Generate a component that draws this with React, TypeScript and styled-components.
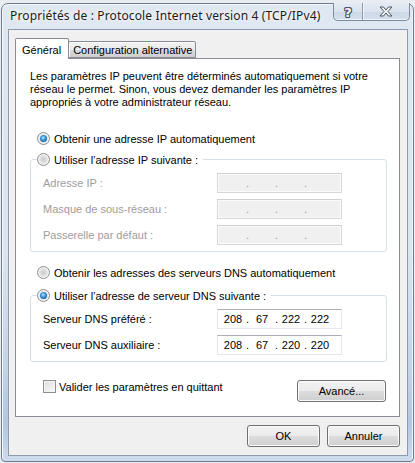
import React from 'react';
import styled, { createGlobalStyle } from 'styled-components';

const DLG = `"Liberation Sans", Arial, sans-serif`;
const CAP = `"Noto Sans", "Open Sans", sans-serif`;

const GlobalStyle = createGlobalStyle`
  * { box-sizing: border-box; }
  html, body { margin: 0; padding: 0; }
  body {
    width: 415px; height: 463px; overflow: hidden;
    padding: 3px 0 0 1px;
    background: #e9ecf0;
    font-family: ${DLG};
    font-size: 11px;
    color: #000;
  }
`;

const Window = styled.div`
  width: 413px;
  height: 459px;
  border: 1px solid #6c7b8e;
  border-radius: 7px 7px 4px 4px;
  background: linear-gradient(to bottom, #dfe7f1 0%, #dbe4ef 55%, #c3d3e8 80%, #b2c7e2 92%, #cfdcec 100%);
  padding: 0 5px 5px 6px;
  display: flex;
  flex-direction: column;
  box-shadow: inset 1px 1px 0 #f6f9fc, inset -1px 0 0 #f0f4f9;
`;

const TitleBar = styled.div`
  height: 25px;
  display: flex;
  align-items: flex-start;
`;

const Title = styled.div`
  font-family: ${CAP};
  font-size: 12px;
  letter-spacing: 0.14px;
  color: #1b1b1b;
  margin: 4px 0 0 2px;
  line-height: 16px;
  text-shadow: 0 0 6px #ffffff, 0 0 3px #ffffff;
  white-space: nowrap;
`;

const CaptionGroup = styled.div`
  margin: -1px -2px 0 auto;
  display: flex;
  height: 18px;
  border: 1px solid #7d8ba0;
  border-top: none;
  border-radius: 0 0 5px 5px;
  overflow: hidden;
  background: linear-gradient(to bottom, #e4ebf4 0%, #dbe3ee 50%, #ccd7e6 51%, #d6e0ec 100%);
  box-shadow: inset 0 -1px 0 #eef3f9;
`;

const CaptionButton = styled.div<{ $w: number; $sep?: boolean }>`
  width: ${p => p.$w}px;
  height: 100%;
  display: flex;
  align-items: center;
  justify-content: center;
  border-left: ${p => (p.$sep ? '1px solid #8d9bb0' : 'none')};
  box-shadow: ${p => (p.$sep ? 'inset 1px 0 0 #eef3f9' : 'none')};
`;

const HelpGlyph = styled.span`
  font-family: "DejaVu Sans", sans-serif;
  font-weight: bold;
  font-size: 13px;
  line-height: 13px;
  color: #f4f6f9;
  margin-top: 1px;
  text-shadow: 1px 0 0 #4a5564, -1px 0 0 #4a5564, 0 1px 0 #4a5564, 0 -1px 0 #4a5564,
    1px 1px 0 #4a5564, -1px -1px 0 #4a5564, 1px -1px 0 #4a5564, -1px 1px 0 #4a5564;
`;

const Client = styled.div`
  flex: 1;
  background: #f0f0f0;
  border: 1px solid #8e9bad;
  padding: 8px 7px 8px 6px;
  display: flex;
  flex-direction: column;
`;

const TabStrip = styled.div`
  display: flex;
  align-items: flex-end;
  height: 20px;
  position: relative;
  z-index: 1;
`;

const Tab = styled.div<{ $active?: boolean }>`
  height: ${p => (p.$active ? 21 : 17)}px;
  margin-bottom: ${p => (p.$active ? -1 : 0)}px;
  margin-left: ${p => (p.$active ? 0 : -1)}px;
  padding: ${p => (p.$active ? '2px 7px 0 6px' : '1px 3px 0 4px')};
  border: 1px solid #898c95;
  border-bottom: ${p => (p.$active ? 'none' : '1px solid #898c95')};
  border-radius: 2px 2px 0 0;
  background: ${p =>
    p.$active ? '#ffffff' : 'linear-gradient(to bottom, #f2f2f2 0%, #ebebeb 50%, #dddddd 51%, #cfcfcf 100%)'};
  display: flex;
  align-items: center;
  white-space: nowrap;
  position: relative;
  z-index: ${p => (p.$active ? 2 : 1)};
  box-shadow: ${p => (p.$active ? 'none' : 'inset 1px 1px 0 #fcfcfc')};
`;

const Panel = styled.div`
  height: 359px;
  background: #ffffff;
  border: 1px solid #898c95;
  padding: 11px 11px 13px 14px;
  display: flex;
  flex-direction: column;
`;

const Intro = styled.p`
  margin: 0;
  line-height: 13px;
  white-space: nowrap;
`;

const RadioRow = styled.label<{ $top?: number }>`
  display: flex;
  align-items: center;
  gap: 4px;
  height: 13px;
  margin: ${p => p.$top ?? 0}px 0 0 7px;
  white-space: nowrap;
`;

const RadioMark = styled.span<{ $checked?: boolean }>`
  width: 13px;
  height: 13px;
  flex: none;
  border-radius: 50%;
  border: 1px solid #8c8e90;
  background: radial-gradient(circle at 50% 50%, #c9c9c9 0%, #e2e2e2 45%, #f6f6f6 100%);
  box-shadow: inset 0 0 0 1px #f4f4f4;
  display: flex;
  align-items: center;
  justify-content: center;
  &::after {
    content: '';
    display: ${p => (p.$checked ? 'block' : 'none')};
    width: 7px;
    height: 7px;
    border-radius: 50%;
    background: radial-gradient(circle at 45% 40%, #b9e3fb 0%, #3a97d8 40%, #135ca3 80%, #0d3f74 100%);
  }
`;

const Group = styled.fieldset<{ $top: number }>`
  margin: ${p => p.$top}px 0 0 0;
  width: 357px;
  padding: 0;
  border: 1px solid #d5dfe5;
  border-radius: 3px;
  min-inline-size: 0;
`;

const Legend = styled.legend`
  margin-left: 6px;
  padding: 0 5px 0 0;
  height: 13px;
`;

const LegendRadio = styled(RadioRow)`
  margin: 0;
`;

const Rows = styled.div`
  display: grid;
  grid-template-columns: 174px 125px;
  row-gap: 6px;
  align-items: center;
  padding: 7px 0 6px 12px;
`;

const FieldLabel = styled.span<{ $disabled?: boolean }>`
  color: ${p => (p.$disabled ? '#9d9d9d' : '#000')};
  white-space: nowrap;
`;

const IpBox = styled.div<{ $disabled?: boolean }>`
  height: 20px;
  display: flex;
  align-items: center;
  padding-left: 3px;
  border: 1px solid ${p => (p.$disabled ? '#d7d7d7' : '#e3e9ef')};
  border-top-color: ${p => (p.$disabled ? '#cfcfcf' : '#abadb3')};
  background: ${p => (p.$disabled ? '#f0f0f0' : '#ffffff')};
  color: ${p => (p.$disabled ? '#9d9d9d' : '#000')};
  box-shadow: ${p => (p.$disabled ? 'inset 0 0 0 1px #fbfbfb' : 'none')};
`;

const Octet = styled.span`
  width: 24px;
  text-align: center;
`;

const Dot = styled.span`
  width: 5px;
  text-align: center;
`;

const BottomRow = styled.div`
  display: flex;
  justify-content: space-between;
  align-items: flex-start;
  width: 357px;
  margin-top: 18px;
  padding-left: 13px;
  padding-right: 1px;
`;

const CheckRow = styled.label`
  display: flex;
  align-items: center;
  gap: 3px;
  height: 13px;
  white-space: nowrap;
`;

const CheckBox = styled.span`
  width: 13px;
  height: 13px;
  border: 1px solid #8e8f8f;
  background: linear-gradient(135deg, #dcdcdc 0%, #eeeeee 60%, #fbfbfb 100%);
  box-shadow: inset 0 0 0 1px #f4f4f4;
`;

const Button = styled.button<{ $w: number }>`
  width: ${p => p.$w}px;
  height: 22px;
  padding: 0;
  font-family: ${DLG};
  font-size: 11px;
  color: #000;
  border: 1px solid #707070;
  border-radius: 3px;
  background: linear-gradient(to bottom, #f2f2f2 0%, #ebebeb 49%, #dddddd 50%, #cfcfcf 100%);
  box-shadow: inset 0 0 0 1px #fbfbfb;
`;

const Footer = styled.div`
  display: flex;
  justify-content: flex-end;
  gap: 7px;
  margin-top: 8px;
`;

function CloseGlyph() {
  return (
    <svg width="14" height="11" viewBox="0 0 14 11">
      <path
        d="M1 1 H4.5 L7 4 L9.5 1 H13 L9 5.5 L13 10 H9.5 L7 7 L4.5 10 H1 L5 5.5 Z"
        fill="#f4f6f9"
        stroke="#4a5564"
        strokeWidth="1"
        strokeLinejoin="round"
      />
    </svg>
  );
}

function IpField({ values, disabled }: { values?: string[]; disabled?: boolean }) {
  const v = values ?? ['', '', '', ''];
  return (
    <IpBox $disabled={disabled}>
      <Octet>{v[0]}</Octet>
      <Dot>.</Dot>
      <Octet>{v[1]}</Octet>
      <Dot>.</Dot>
      <Octet>{v[2]}</Octet>
      <Dot>.</Dot>
      <Octet>{v[3]}</Octet>
    </IpBox>
  );
}

export default function App() {
  return (
    <>
      <GlobalStyle />
      <Window>
        <TitleBar>
          <Title>Propriétés de : Protocole Internet version 4 (TCP/IPv4)</Title>
          <CaptionGroup>
            <CaptionButton $w={28}>
              <HelpGlyph>?</HelpGlyph>
            </CaptionButton>
            <CaptionButton $w={47} $sep>
              <CloseGlyph />
            </CaptionButton>
          </CaptionGroup>
        </TitleBar>
        <Client>
          <TabStrip>
            <Tab $active>Général</Tab>
            <Tab>Configuration alternative</Tab>
          </TabStrip>
          <Panel>
            <Intro>
              Les paramètres IP peuvent être déterminés automatiquement si votre
              <br />
              réseau le permet. Sinon, vous devez demander les paramètres IP
              <br />
              appropriés à votre administrateur réseau.
            </Intro>
            <RadioRow $top={23}>
              <RadioMark $checked />
              Obtenir une adresse IP automatiquement
            </RadioRow>
            <Group $top={8}>
              <Legend>
                <LegendRadio>
                  <RadioMark />
                  Utiliser l’adresse IP suivante :
                </LegendRadio>
              </Legend>
              <Rows>
                <FieldLabel $disabled>Adresse IP :</FieldLabel>
                <IpField disabled />
                <FieldLabel $disabled>Masque de sous-réseau :</FieldLabel>
                <IpField disabled />
                <FieldLabel $disabled>Passerelle par défaut :</FieldLabel>
                <IpField disabled />
              </Rows>
            </Group>
            <RadioRow $top={14}>
              <RadioMark />
              Obtenir les adresses des serveurs DNS automatiquement
            </RadioRow>
            <Group $top={10}>
              <Legend>
                <LegendRadio>
                  <RadioMark $checked />
                  Utiliser l’adresse de serveur DNS suivante :
                </LegendRadio>
              </Legend>
              <Rows>
                <FieldLabel>Serveur DNS préféré :</FieldLabel>
                <IpField values={['208', '67', '222', '222']} />
                <FieldLabel>Serveur DNS auxiliaire :</FieldLabel>
                <IpField values={['208', '67', '220', '220']} />
              </Rows>
            </Group>
            <BottomRow>
              <CheckRow>
                <CheckBox />
                Valider les paramètres en quittant
              </CheckRow>
              <Button $w={89}>Avancé...</Button>
            </BottomRow>
          </Panel>
          <Footer>
            <Button $w={73}>OK</Button>
            <Button $w={73}>Annuler</Button>
          </Footer>
        </Client>
      </Window>
    </>
  );
}
